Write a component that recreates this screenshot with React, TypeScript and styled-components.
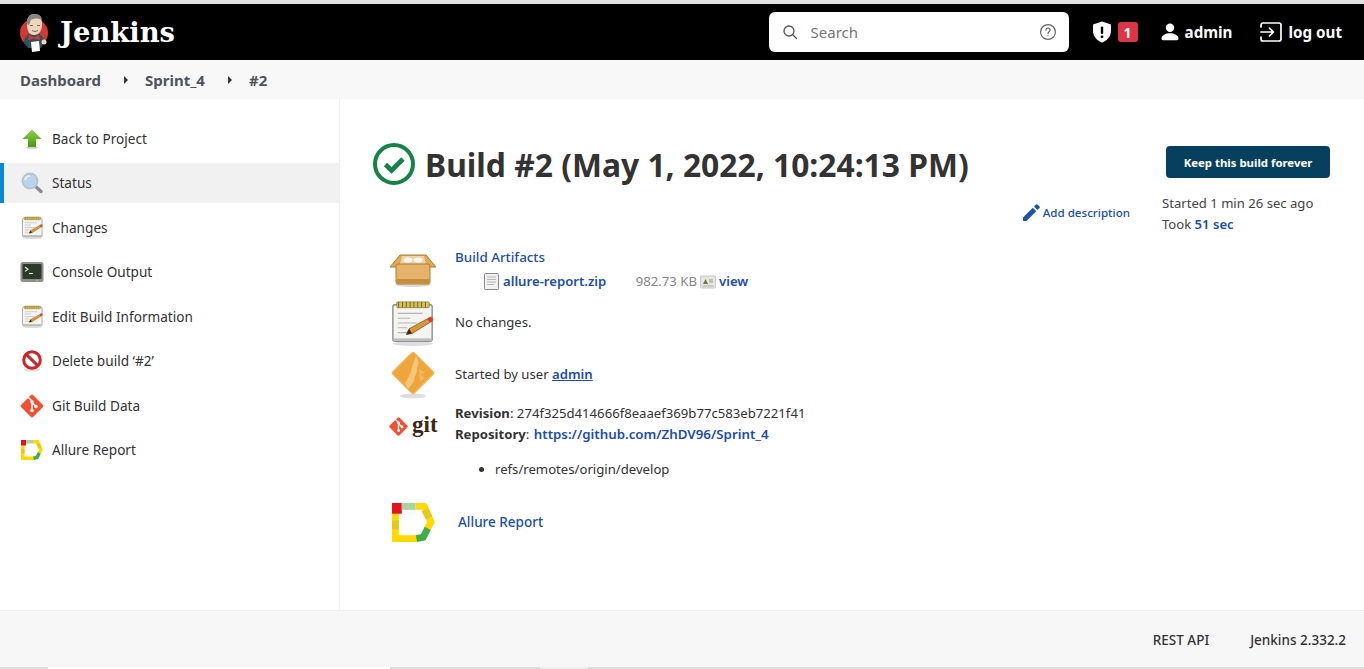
import React from 'react';
import styled, { createGlobalStyle } from 'styled-components';

const GlobalStyle = createGlobalStyle`
  html, body {
    margin: 0;
    padding: 0;
    background: white;
    overflow: hidden;
  }
  body {
    font-family: "Noto Sans", "Open Sans", sans-serif;
    font-size: 14px;
    color: #333;
  }
  * { box-sizing: border-box; }
`;

const Page = styled.div`
  height: 669px;
  display: flex;
  flex-direction: column;
  border-top: 4px solid #e2e2e2;
`;

const Header = styled.header`
  height: 56px;
  flex: none;
  background: #000;
  color: white;
  display: flex;
  align-items: center;
  padding: 0 22px 0 19px;
`;

const Logo = styled.div`
  display: flex;
  align-items: center;
  gap: 11px;
  flex: 1;
`;

const LogoText = styled.span`
  font-family: "DejaVu Serif", "Liberation Serif", serif;
  font-weight: 700;
  font-size: 27.4px;
  color: white;
`;

const SearchBox = styled.div`
  width: 300px;
  height: 40px;
  background: white;
  border-radius: 6px;
  display: flex;
  align-items: center;
  padding: 0 12px 0 13px;
  color: #555;
`;

const SearchText = styled.span`
  flex: 1;
  margin-left: 13px;
  font-size: 15px;
  color: #777;
`;

const HeaderItem = styled.div<{ $left: number }>`
  display: flex;
  align-items: center;
  gap: 6px;
  margin-left: ${p => p.$left}px;
  font-weight: 700;
  font-size: 15.2px;
  color: white;
`;

const Badge = styled.span`
  width: 20px;
  height: 20px;
  background: #dc3545;
  border-radius: 3px;
  color: white;
  font-weight: 700;
  font-size: 14px;
  display: flex;
  align-items: center;
  justify-content: center;
`;

const Breadcrumbs = styled.nav`
  height: 39px;
  flex: none;
  background: #f8f8f8;
  display: flex;
  align-items: center;
  padding-left: 20px;
  font-weight: 700;
  font-size: 15px;
  color: #4d545d;
`;

const Crumb = styled.span``;

const Caret = styled.span`
  width: 0;
  height: 0;
  margin: 0 17px 0 23px;
  border-top: 4px solid transparent;
  border-bottom: 4px solid transparent;
  border-left: 4px solid #333;
`;

const Body = styled.div`
  flex: 1;
  display: flex;
  min-height: 0;
`;

const Sidebar = styled.aside`
  width: 340px;
  flex: none;
  border-right: 1px solid #f0f0f0;
  padding-top: 19.6px;
  display: flex;
  flex-direction: column;
  gap: 4.5px;
`;

const SideItem = styled.a<{ $active?: boolean }>`
  height: 40px;
  display: flex;
  align-items: center;
  gap: 8px;
  padding-left: ${p => (p.$active ? 16 : 20)}px;
  border-left: ${p => (p.$active ? '4px solid #0a88d8' : 'none')};
  background: ${p => (p.$active ? '#f1f1f1' : 'transparent')};
  font-size: 13.6px;
  line-height: 20px;
  color: #333;
`;

const SideIcon = styled.span`
  width: 24px;
  height: 24px;
  display: flex;
  align-items: center;
  justify-content: center;
`;

const Main = styled.main`
  flex: 1;
  display: flex;
  padding: 44px 34px 0 33px;
  min-width: 0;
`;

const Content = styled.div`
  flex: 1;
  min-width: 0;
`;

const TitleRow = styled.div`
  display: flex;
  align-items: center;
  gap: 10px;
  height: 42px;
`;

const Title = styled.h1`
  margin: 0;
  font-size: 31.8px;
  font-weight: 700;
  color: #333;
  white-space: nowrap;
`;

const DescriptionRow = styled.div`
  display: flex;
  justify-content: flex-end;
  align-items: center;
  gap: 3px;
  height: 20px;
  margin-top: 17px;
  padding-right: 32px;
`;

const Link = styled.a<{ $bold?: boolean; $underline?: boolean }>`
  color: #1a4db0;
  font-weight: ${p => (p.$bold ? 600 : 500)};
  text-decoration: ${p => (p.$underline ? 'underline' : 'none')};
`;

const SmallLink = styled(Link)`
  font-size: 11.6px;
`;

const Rows = styled.div`
  margin-top: 25px;
  font-size: 13.15px;
`;

const Row = styled.div<{ $height: number; $align?: string }>`
  display: flex;
  align-items: ${p => p.$align || 'center'};
  height: ${p => p.$height}px;
`;

const RowIcon = styled.div<{ $top?: number }>`
  width: 82px;
  flex: none;
  display: flex;
  justify-content: center;
  margin-left: -1px;
  margin-top: ${p => p.$top || 0}px;
`;

const RowBody = styled.div<{ $shift?: number; $top?: number }>`
  margin-left: ${p => p.$shift || 1}px;
  margin-top: ${p => p.$top || 0}px;
  line-height: 21px;
`;

const ArtifactsLink = styled(Link)`
  font-size: 13.4px;
`;

const ReportLink = styled(Link)`
  font-size: 13.5px;
`;

const RepoLink = styled(Link)`
  font-size: 13.3px;
  margin-left: 1px;
`;

const Artifact = styled.div`
  display: flex;
  align-items: center;
  gap: 3px;
  margin: 3px 0 0 29px;
`;

const FileLink = styled(Link)`
  margin-left: 1px;
`;

const Size = styled.span`
  margin-left: 26.5px;
  color: #888;
`;

const Strong = styled.b`
  font-weight: 700;
`;

const RefList = styled.ul`
  margin: 14px 0 0;
  padding-left: 40px;
`;

const Side = styled.div`
  width: 168px;
  flex: none;
  display: flex;
  flex-direction: column;
  align-items: flex-end;
  padding-top: 3px;
`;

const KeepButton = styled.button`
  width: 164px;
  height: 32px;
  border: none;
  border-radius: 4px;
  background: #07405f;
  color: white;
  font-family: inherit;
  font-weight: 700;
  font-size: 11.4px;
`;

const BuildInfo = styled.div`
  width: 100%;
  margin-top: 15px;
  font-size: 13.1px;
  line-height: 21px;
  color: #444;
`;

const Footer = styled.footer`
  height: 57px;
  flex: none;
  background: #f7f7f7;
  border-top: 1px solid #efefef;
  display: flex;
  align-items: center;
  justify-content: flex-end;
  gap: 41px;
  padding: 2px 18px 0 0;
  font-size: 13.5px;
  font-weight: 500;
`;

const ScrollStrip = styled.div`
  height: 2px;
  flex: none;
  display: flex;
  background: #dcdcdc;
`;

const StripPiece = styled.div<{ $w: number; $left: number; $color: string }>`
  width: ${p => p.$w}px;
  margin-left: ${p => p.$left}px;
  background: ${p => p.$color};
`;

const GitWord = styled.text`
  font-family: "Liberation Serif", serif;
  font-weight: 700;
  font-size: 23px;
  fill: #3b2a12;
`;

const JenkinsLogo = () => (
  <svg width="30" height="39" viewBox="0 0 30 39">
    <circle cx="15" cy="20" r="14" fill="#d33833" />
    <path d="M5 30c0-7 4-10 10-10s10 3 10 9l-3 6H9z" fill="#335061" />
    <path d="M8 11c0-7 3-10 7-10s8 3 8 10-3 11-8 11-7-4-7-11z" fill="#f0d6b7" />
    <path d="M8 11c-1-6 3-10 8-10s7 3 7 6c-3-2-9-2-11 0l-2 5z" fill="#8a8586" />
    <path d="M11 12.500h3M18 12.500h3M13 17.500c2 1.200 4 1.200 6 0" stroke="#49728b" strokeWidth="1" fill="none" />
    <path d="M10 22l5 2.500 5-2.500 1 5-6-1.500-6 1.500z" fill="#d33833" />
    <path d="M12 29l8-1 1 10-8 1z" fill="#fff" />
    <circle cx="25" cy="29" r="2.500" fill="#f0d6b7" />
  </svg>
);

const SearchIcon = () => (
  <svg width="16" height="16" viewBox="0 0 16 16" fill="none" stroke="#555" strokeWidth="1.3">
    <circle cx="7" cy="7" r="5" />
    <path d="M10.800 10.800L14.500 14.500" strokeLinecap="round" />
  </svg>
);

const HelpIcon = () => (
  <svg width="18" height="18" viewBox="0 0 18 18" fill="none" stroke="#666" strokeWidth="1.2">
    <circle cx="9" cy="9" r="7.400" />
    <path d="M6.900 7.200c0-1.200 1-2 2.100-2s2.100.8 2.100 1.900c0 1.600-2.100 1.600-2.100 3.300" strokeLinecap="round" />
    <circle cx="9" cy="12.600" r=".6" fill="#666" stroke="none" />
  </svg>
);

const ShieldIcon = () => (
  <svg width="20" height="22" viewBox="0 0 20 22">
    <path d="M10 .5L1 3.500v6c0 6 4 10 9 12 5-2 9-6 9-12v-6z" fill="white" />
    <rect x="8.800" y="5.500" width="2.400" height="7.500" rx="1" fill="#000" />
    <circle cx="10" cy="15.800" r="1.400" fill="#000" />
  </svg>
);

const PersonIcon = () => (
  <svg width="18" height="18" viewBox="0 0 18 18" fill="white">
    <circle cx="9" cy="4.800" r="4.200" />
    <path d="M9 10.200c-4 0-8.500 2-8.500 5.400 0 1 .6 1.600 1.600 1.600h13.800c1 0 1.600-.6 1.600-1.600 0-3.400-4.500-5.400-8.500-5.400z" />
  </svg>
);

const LogoutIcon = () => (
  <svg width="22" height="20" viewBox="0 0 22 20" fill="none" stroke="white" strokeWidth="1.700" strokeLinecap="round" strokeLinejoin="round">
    <path d="M1 5V3a2 2 0 012-2h16a2 2 0 012 2v14a2 2 0 01-2 2H3a2 2 0 01-2-2v-2" />
    <path d="M1 10h12M9.500 6.200L13.500 10l-4 3.800" />
  </svg>
);

const ArrowUpIcon = () => (
  <svg width="20" height="20" viewBox="0 0 20 20">
    <defs>
      <linearGradient id="up" x1="0" y1="0" x2="0" y2="1">
        <stop offset="0" stopColor="#8fd14f" />
        <stop offset="1" stopColor="#4b9a10" />
      </linearGradient>
    </defs>
    <ellipse cx="10" cy="18.600" rx="6" ry="1.200" fill="#ccc" />
    <path d="M10 .5L19.500 10H14v8H6v-8H.5z" fill="url(#up)" />
  </svg>
);

const MagnifierIcon = () => (
  <svg width="22" height="22" viewBox="0 0 22 22">
    <path d="M13.500 13.500l6.500 6" stroke="#8c8c8c" strokeWidth="3.400" strokeLinecap="round" />
    <circle cx="9" cy="9" r="7.500" fill="#b8d4f0" stroke="#bcc2c8" strokeWidth="1.800" />
    <path d="M4 8c.6-2.400 2.400-4 5-4" stroke="#eef6fd" strokeWidth="1.600" fill="none" />
  </svg>
);

const NotepadIcon = ({ size }: { size: number }) => (
  <svg width={size} height={size} viewBox="0 0 48 48">
    <ellipse cx="24" cy="45.500" rx="21" ry="2.500" fill="#ddd" />
    <rect x="3" y="5" width="41" height="38" rx="2" fill="#f4f4f2" stroke="#8a8a8a" strokeWidth="1.400" />
    <rect x="3.600" y="40" width="39.800" height="3" fill="#bdbdbd" />
    <rect x="7" y="2" width="34" height="6" rx="1" fill="#d8c25a" stroke="#8f7f2c" strokeWidth=".8" />
    <path d="M9 2v6M13 2v6M17 2v6M21 2v6M25 2v6M29 2v6M33 2v6M37 2v6" stroke="#6f6322" strokeWidth="1" />
    <path d="M8 14h26M8 19h13M8 24h20M8 29h10M8 34h14" stroke="#b4b4b4" strokeWidth="1.200" />
    <path d="M17 36l3-6 22-12c2-1 4 2 2 4L23 35z" fill="#d9973a" stroke="#7c5418" strokeWidth=".8" />
    <path d="M17 36l3-6 3 5z" fill="#3b2c16" />
    <path d="M41 18.500c2-1 4 1.500 3 3.500l-2.500 1.200-2.500-3.500z" fill="#e2353a" />
  </svg>
);

const TerminalIcon = () => (
  <svg width="24" height="22" viewBox="0 0 24 22">
    <rect x=".5" y="1" width="23" height="20" rx="2.500" fill="#8d8f88" />
    <rect x="2.500" y="3" width="19" height="15" rx="1" fill="#2c3a2a" />
    <path d="M5 6l3 2.200L5 10.400" fill="none" stroke="#eee" strokeWidth="1.100" />
    <path d="M9 12.500h4" stroke="#eee" strokeWidth="1.100" />
    <circle cx="17" cy="19.500" r=".7" fill="#8fe36a" />
  </svg>
);

const NoEntryIcon = () => (
  <svg width="22" height="22" viewBox="0 0 22 22">
    <ellipse cx="11" cy="20" rx="8" ry="1.600" fill="#ddd" />
    <circle cx="11" cy="10" r="8.300" fill="#fff" stroke="#c9272b" strokeWidth="3" />
    <path d="M5.200 4.400L16.800 15.600" stroke="#c9272b" strokeWidth="3" />
  </svg>
);

const GitDiamond = ({ size }: { size: number }) => (
  <svg width={size} height={size} viewBox="0 0 24 24">
    <rect x="3.500" y="3.500" width="17" height="17" rx="1.800" transform="rotate(45 12 12)" fill="#f05133" />
    <path d="M8.500 3.500L12 7v8.500M12 8.500l4 4" stroke="#fff" strokeWidth="1.500" fill="none" />
    <circle cx="12" cy="8" r="1.700" fill="#fff" />
    <circle cx="12" cy="16.500" r="1.700" fill="#fff" />
    <circle cx="16" cy="12.500" r="1.700" fill="#fff" />
  </svg>
);

const AllureIcon = ({ size }: { size: number }) => (
  <svg width={size} height={size * 40 / 44} viewBox="0 0 44 40" fill="none">
    <path d="M3.500 11v29" stroke="#ffd900" strokeWidth="7" />
    <rect x="0" y="18" width="7" height="9" fill="#e4c81e" />
    <path d="M0 36.500h26" stroke="#ffd900" strokeWidth="7" />
    <rect x="0" y="0" width="10" height="11" fill="#e8101a" />
    <rect x="10" y="0" width="14" height="7" fill="#a7d3a5" />
    <path d="M24 3.500h9l7 16-4 7" stroke="#ffd900" strokeWidth="7" strokeLinejoin="round" />
    <path d="M33.500 7l4.500 8.500" stroke="#e3c81f" strokeWidth="7" />
    <path d="M36.500 26l-4.500 9-7 1.500" stroke="#3fae49" strokeWidth="7" />
  </svg>
);

const PencilIcon = () => (
  <svg width="17" height="17" viewBox="0 0 17 17" fill="#1a56b0">
    <path d="M0 13.500V17h3.500L13.300 7.200 9.800 3.700z" />
    <path d="M16.500 4a1 1 0 000-1.400L14.400.5a1 1 0 00-1.400 0l-2 2 3.500 3.500z" />
  </svg>
);

const PassIcon = () => (
  <svg width="42" height="42" viewBox="0 0 42 42" fill="none">
    <circle cx="21" cy="21" r="19" stroke="#138347" strokeWidth="4" />
    <path d="M12.500 21.500l6 6L30 16" stroke="#138347" strokeWidth="4.600" />
  </svg>
);

const BoxIcon = () => (
  <svg width="48" height="33" viewBox="0 0 48 33">
    <ellipse cx="24" cy="30.500" rx="18" ry="2.500" fill="#d8d8d8" />
    <path d="M11 1h26l10 12H38v3H10v-3H1z" fill="#dfa958" stroke="#b07c34" strokeWidth="1" />
    <path d="M13 2h22l2 8H11z" fill="#efd2a0" />
    <ellipse cx="19" cy="6" rx="4.500" ry="2.500" fill="#f6f6f6" />
    <ellipse cx="29" cy="6" rx="4.500" ry="2.500" fill="#f6f6f6" />
    <rect x="7" y="10" width="34" height="20" rx="2" fill="#e5b36b" stroke="#b07c34" strokeWidth="1" />
    <rect x="7.500" y="25" width="33" height="4.500" fill="#c78d3a" />
  </svg>
);

const GearDiamondIcon = () => (
  <svg width="44" height="48" viewBox="0 0 44 48">
    <ellipse cx="22" cy="45" rx="13" ry="2.500" fill="#ddd" />
    <rect x="7" y="7" width="30" height="30" rx="2" transform="rotate(45 22 22)" fill="#eda63a" stroke="#f6b25c" strokeWidth="1.500" />
    <path d="M14 32c3-3 3-6 5-9s1-6 3-10l3-8 3 7c-3 4-1 8-3 11s-1 6-3 9l-5 6z" fill="#f6c57c" />
    <path d="M28 18l6 3-4 3 4 3-5 3z" fill="#f2b867" />
  </svg>
);

const FileIcon = () => (
  <svg width="15" height="17" viewBox="0 0 15 17" fill="#f2f2f2" stroke="#8a8a8a">
    <rect x=".5" y=".5" width="14" height="16" rx="1" />
    <path d="M3 4h9M3 6.500h9M3 9h9M3 11.500h7" stroke="#b5b5b5" />
  </svg>
);

const ViewIcon = () => (
  <svg width="16" height="14" viewBox="0 0 16 14">
    <rect x=".5" y="1" width="15" height="12" rx="1" fill="#e6e6e2" stroke="#c8c8c8" />
    <path d="M3 9l2.500-5L8 9z" fill="#6f7d3a" />
    <path d="M9 5h4M9 7h4" stroke="#999" />
    <path d="M2.500 11h11" stroke="#aaa" />
  </svg>
);

const GitWordLogo = () => (
  <svg width="50" height="34" viewBox="0 -6 50 34">
    <rect x="3.500" y="4.500" width="14" height="14" rx="1.500" transform="rotate(45 10.500 11.500)" fill="#f05133" />
    <path d="M7.500 4.500l3 3v8M10.500 8.500l3.500 3.500" stroke="#fff" strokeWidth="1.300" fill="none" />
    <circle cx="10.500" cy="8" r="1.400" fill="#fff" />
    <circle cx="10.500" cy="15.500" r="1.400" fill="#fff" />
    <circle cx="14" cy="12" r="1.400" fill="#fff" />
    <GitWord x="24" y="17">git</GitWord>
  </svg>
);

const sideItems = [
  { label: 'Back to Project', icon: <ArrowUpIcon /> },
  { label: 'Status', icon: <MagnifierIcon />, active: true },
  { label: 'Changes', icon: <NotepadIcon size={23} /> },
  { label: 'Console Output', icon: <TerminalIcon /> },
  { label: 'Edit Build Information', icon: <NotepadIcon size={23} /> },
  { label: 'Delete build ‘#2’', icon: <NoEntryIcon /> },
  { label: 'Git Build Data', icon: <GitDiamond size={24} /> },
  { label: 'Allure Report', icon: <AllureIcon size={22} /> },
];

export default function App() {
  return (
    <Page>
      <GlobalStyle />
      <Header>
        <Logo>
          <JenkinsLogo />
          <LogoText>Jenkins</LogoText>
        </Logo>
        <SearchBox>
          <SearchIcon />
          <SearchText>Search</SearchText>
          <HelpIcon />
        </SearchBox>
        <HeaderItem $left={23}>
          <ShieldIcon />
          <Badge>1</Badge>
        </HeaderItem>
        <HeaderItem $left={23}>
          <PersonIcon />
          admin
        </HeaderItem>
        <HeaderItem $left={28}>
          <LogoutIcon />
          log out
        </HeaderItem>
      </Header>
      <Breadcrumbs>
        <Crumb>Dashboard</Crumb>
        <Caret />
        <Crumb>Sprint_4</Crumb>
        <Caret />
        <Crumb>#2</Crumb>
      </Breadcrumbs>
      <Body>
        <Sidebar>
          {sideItems.map(item => (
            <SideItem key={item.label} $active={item.active}>
              <SideIcon>{item.icon}</SideIcon>
              {item.label}
            </SideItem>
          ))}
        </Sidebar>
        <Main>
          <Content>
            <TitleRow>
              <PassIcon />
              <Title>Build #2 (May 1, 2022, 10:24:13 PM)</Title>
            </TitleRow>
            <DescriptionRow>
              <PencilIcon />
              <SmallLink>Add description</SmallLink>
            </DescriptionRow>
            <Rows>
              <Row $height={51} $align="flex-start">
                <RowIcon $top={7}><BoxIcon /></RowIcon>
                <RowBody>
                  <ArtifactsLink>Build Artifacts</ArtifactsLink>
                  <Artifact>
                    <FileIcon />
                    <FileLink $bold>allure-report.zip</FileLink>
                    <Size>982.73 KB</Size>
                    <ViewIcon />
                    <Link $bold>view</Link>
                  </Artifact>
                </RowBody>
              </Row>
              <Row $height={49}>
                <RowIcon><NotepadIcon size={46} /></RowIcon>
                <RowBody>No changes.</RowBody>
              </Row>
              <Row $height={55}>
                <RowIcon><GearDiamondIcon /></RowIcon>
                <RowBody>
                  Started by user <Link $underline $bold>admin</Link>
                </RowBody>
              </Row>
              <Row $height={96} $align="flex-start">
                <RowIcon $top={7}><GitWordLogo /></RowIcon>
                <RowBody $top={1}>
                  <div><Strong>Revision</Strong>: 274f325d414666f8eaaef369b77c583eb7221f41</div>
                  <div><Strong>Repository</Strong>: <RepoLink $bold>https://github.com/ZhDV96/Sprint_4</RepoLink></div>
                  <RefList>
                    <li>refs/remotes/origin/develop</li>
                  </RefList>
                </RowBody>
              </Row>
              <Row $height={49}>
                <RowIcon><AllureIcon size={43} /></RowIcon>
                <RowBody $shift={4}><ReportLink>Allure Report</ReportLink></RowBody>
              </Row>
            </Rows>
          </Content>
          <Side>
            <KeepButton>Keep this build forever</KeepButton>
            <BuildInfo>
              <div>Started 1 min 26 sec ago</div>
              <div>Took <Link $bold>51 sec</Link></div>
            </BuildInfo>
          </Side>
        </Main>
      </Body>
      <Footer>
        <span>REST API</span>
        <span>Jenkins 2.332.2</span>
      </Footer>
      <ScrollStrip>
        <StripPiece $w={342} $left={48} $color="#ffffff" />
        <StripPiece $w={48} $left={150} $color="#efefef" />
      </ScrollStrip>
    </Page>
  );
}
